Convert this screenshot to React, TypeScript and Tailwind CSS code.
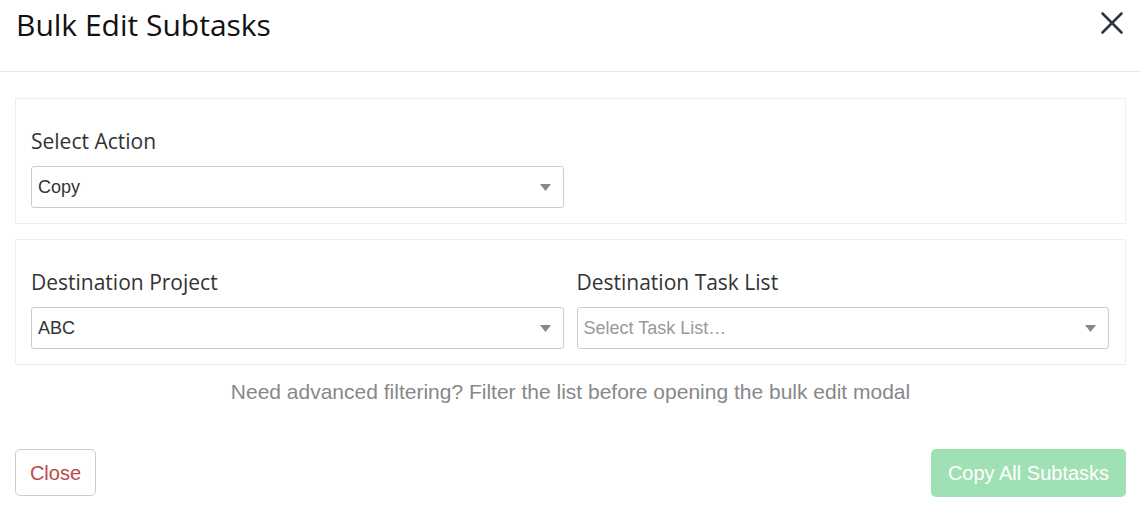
import React from "react";

const Caret = () => (
  <svg width="11" height="7" viewBox="0 0 11 7" className="shrink-0">
    <path d="M0 0 L11 0 L5.5 7 Z" fill="#888888" />
  </svg>
);

const Select = ({ value, placeholder }: { value?: string; placeholder?: string }) => (
  <div className="flex h-[42px] items-center justify-between rounded-[3px] border border-[#cccccc] bg-white pl-[6px] pr-[12px]">
    <span
      className={`text-[18px] ${value ? "text-[#333333]" : "text-[#999999]"}`}
      style={{ fontFamily: '"Liberation Sans", Arial, sans-serif' }}
    >
      {value ?? placeholder}
    </span>
    <Caret />
  </div>
);

const Field = ({ label, value, placeholder }: { label: string; value?: string; placeholder?: string }) => (
  <div className="flex flex-col">
    <div className="mb-[10px] text-[21px] leading-[30px] text-[#333333]" style={{ fontFamily: '"Open Sans", sans-serif' }}>
      {label}
    </div>
    <Select value={value} placeholder={placeholder} />
  </div>
);

export default function App() {
  return (
    <div className="h-[509px] w-[1141px] overflow-hidden bg-white" style={{ fontFamily: '"Liberation Sans", Arial, sans-serif' }}>
      <div className="flex h-[72px] items-start justify-between border-b border-[#e6e6eb] pl-[16px] pr-[17px]">
        <h1 className="mt-[5px] text-[30px] leading-[40px] text-[#111111]" style={{ fontFamily: '"Open Sans", sans-serif' }}>
          Bulk Edit Subtasks
        </h1>
        <svg width="24" height="24" viewBox="0 0 24 24" className="mt-[11px]">
          <path d="M2.5 2.5 L21.5 21.5 M21.5 2.5 L2.5 21.5" stroke="#2d3748" strokeWidth="2.6" strokeLinecap="round" />
        </svg>
      </div>
      <div className="flex flex-col px-[15px] pt-[26px]">
        <div className="border border-[#eeeeee] px-[15px] pt-[27px] pb-[15px]">
          <div className="w-[533px]">
            <Field label="Select Action" value="Copy" />
          </div>
        </div>
        <div className="mt-[15px] grid grid-cols-2 gap-[13px] border border-[#eeeeee] pl-[15px] pr-[16px] pt-[27px] pb-[15px]">
          <Field label="Destination Project" value="ABC" />
          <Field label="Destination Task List" placeholder="Select Task List…" />
        </div>
        <div className="mt-[13px] text-center text-[21px] leading-[28px] text-[#888888]">
          Need advanced filtering? Filter the list before opening the bulk edit modal
        </div>
        <div className="mt-[43px] flex justify-between">
          <button className="h-[47px] w-[81px] rounded-[5px] border border-[#cccccc] bg-white text-[20px] text-[#b94a48]">
            Close
          </button>
          <button className="h-[48px] w-[195px] rounded-[5px] bg-[#9fe0b4] text-[20px] text-white">
            Copy All Subtasks
          </button>
        </div>
      </div>
    </div>
  );
}
